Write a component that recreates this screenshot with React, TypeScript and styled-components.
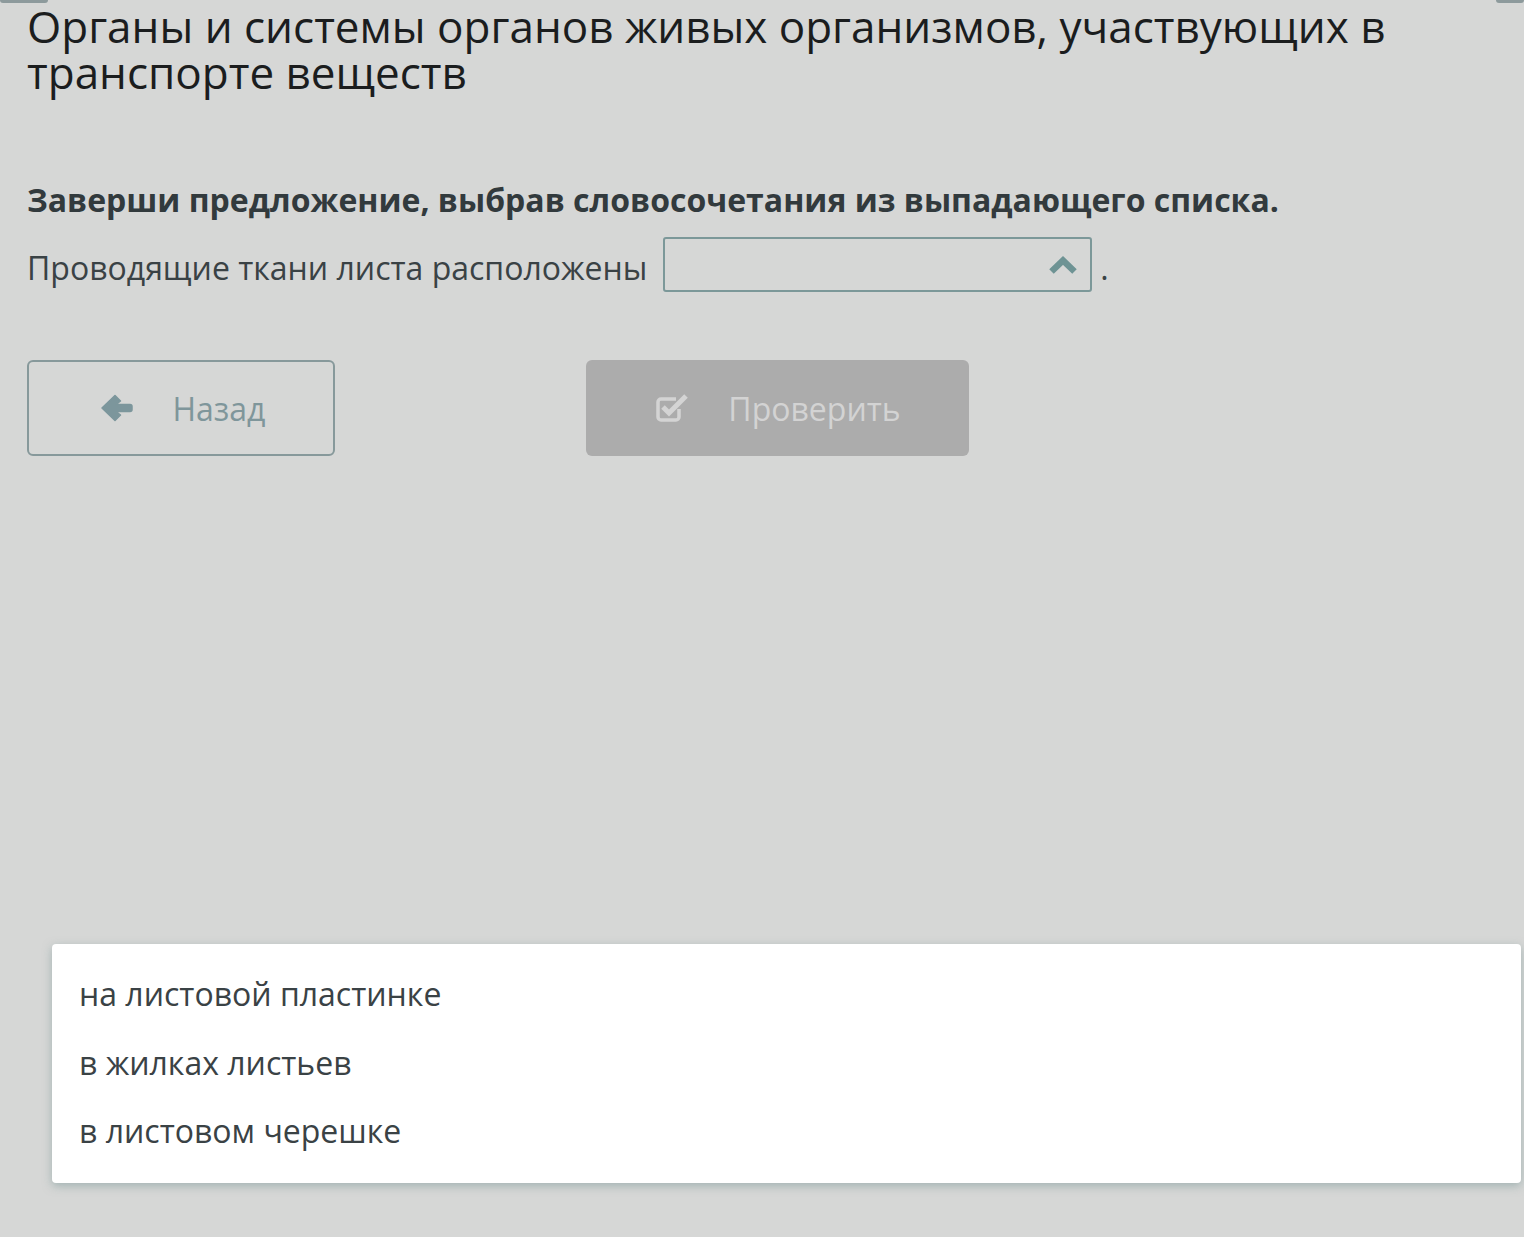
import React from 'react'
import styled, { createGlobalStyle } from 'styled-components'

const GlobalStyle = createGlobalStyle`
  html, body {
    margin: 0;
    padding: 0;
    background: #d6d7d6;
  }
  body {
    font-family: 'Open Sans', 'Noto Sans', sans-serif;
    color: #343b3e;
  }
`

const Page = styled.div`
  position: relative;
  width: 1524px;
  height: 1237px;
  overflow: hidden;
  background: #d6d7d6;
`

const TopTab = styled.div<{ side: 'left' | 'right' }>`
  position: absolute;
  top: 0;
  ${(p) => (p.side === 'left' ? 'left: 0; width: 48px;' : 'right: 0; width: 28px;')}
  height: 3px;
  background: #8d9a9c;
  border-radius: 0 0 4px 4px;
`

const Content = styled.main`
  padding: 3px 27px 0;
`

const Title = styled.h1`
  margin: 0;
  font-size: 44px;
  line-height: 46px;
  font-weight: 400;
  color: #1b1d1e;
`

const Task = styled.p`
  margin: 85px 0 0;
  font-size: 32px;
  line-height: 40px;
  font-weight: 700;
  color: #323a3d;
`

const Sentence = styled.div`
  margin-top: 17px;
  display: flex;
  align-items: center;
  font-size: 32px;
  color: #3a4245;
`

const Label = styled.span`
  padding-top: 6px;
`

const SelectBox = styled.div`
  width: 413px;
  height: 51px;
  margin-left: 16px;
  border: 2px solid #7c9899;
  border-radius: 3px;
  display: flex;
  align-items: center;
  justify-content: flex-end;
  padding-right: 12px;
  box-sizing: content-box;
`

const Dot = styled.span`
  margin-left: 8px;
  margin-top: 6px;
`

const Buttons = styled.div`
  margin-top: 68px;
  display: flex;
  gap: 251px;
`

const Button = styled.div<{ variant: 'outline' | 'disabled' }>`
  height: 96px;
  box-sizing: border-box;
  border-radius: 6px;
  display: flex;
  align-items: center;
  justify-content: center;
  gap: 38px;
  font-size: 32px;
  ${(p) =>
    p.variant === 'outline'
      ? `
    width: 308px;
    border: 2px solid #87999b;
    color: #7f969b;
    padding-left: 4px;
  `
      : `
    width: 383px;
    background: #acacac;
    color: #d3d3d3;
    padding-left: 0;
  `}
`

const Menu = styled.ul`
  position: absolute;
  left: 52px;
  top: 944px;
  width: 1469px;
  height: 239px;
  margin: 0;
  padding: 16px 0 0 27px;
  box-sizing: border-box;
  list-style: none;
  background: #fff;
  border-radius: 4px;
  box-shadow: 0 3px 10px rgba(120, 150, 150, 0.55);
`

const MenuItem = styled.li`
  font-size: 32px;
  line-height: 68.5px;
  color: #3a4245;
`

const ChevronUp = () => (
  <svg width="30" height="20" viewBox="0 0 30 20">
    <path d="M3.5 16.5 L15 5.5 L26.5 16.5" fill="none" stroke="#6e9394" strokeWidth="6.5" />
  </svg>
)

const ArrowLeft = () => (
  <svg width="34" height="30" viewBox="0 0 34 30">
    <path
      d="M2 15 L15 2.5 L20.5 8 L16 11.5 H30 Q32 11.5 32 13.5 V16.5 Q32 18.5 30 18.5 H16 L20.5 22 L15 27.5 Z"
      fill="#7c969c"
      stroke="#7c969c"
      strokeWidth="1.5"
      strokeLinejoin="round"
    />
  </svg>
)

const CheckSquare = () => (
  <svg width="36" height="32" viewBox="0 0 36 32">
    <path
      d="M25 17 V25 A3 3 0 0 1 22 28 H7 A3 3 0 0 1 4 25 V10 A3 3 0 0 1 7 7 H22"
      fill="none"
      stroke="#d4d4d4"
      strokeWidth="3.5"
    />
    <path d="M9 15 L15 21 L32 4" fill="none" stroke="#d4d4d4" strokeWidth="5" />
  </svg>
)

export default function App() {
  return (
    <Page>
      <GlobalStyle />
      <TopTab side="left" />
      <TopTab side="right" />
      <Content>
        <Title>Органы и системы органов живых организмов, участвующих в транспорте веществ</Title>
        <Task>Заверши предложение, выбрав словосочетания из выпадающего списка.</Task>
        <Sentence>
          <Label>Проводящие ткани листа расположены</Label>
          <SelectBox>
            <ChevronUp />
          </SelectBox>
          <Dot>.</Dot>
        </Sentence>
        <Buttons>
          <Button variant="outline">
            <ArrowLeft />
            Назад
          </Button>
          <Button variant="disabled">
            <CheckSquare />
            Проверить
          </Button>
        </Buttons>
      </Content>
      <Menu>
        <MenuItem>на листовой пластинке</MenuItem>
        <MenuItem>в жилках листьев</MenuItem>
        <MenuItem>в листовом черешке</MenuItem>
      </Menu>
    </Page>
  )
}
